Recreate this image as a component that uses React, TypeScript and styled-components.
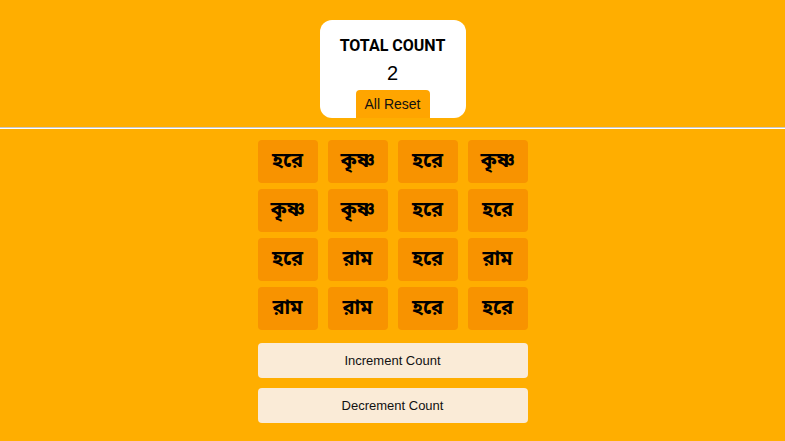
import React, { useState } from "react";
import styled, { createGlobalStyle } from "styled-components";

const Global = createGlobalStyle`
  html, body { margin: 0; padding: 0; background: #ffae00; }
  body { font-family: Roboto, "Liberation Sans", Arial, sans-serif; }
`;

const Page = styled.div`
  min-height: 441px;
  background: #ffae00;
  display: flex;
  flex-direction: column;
  align-items: stretch;
  padding-top: 20px;
  box-sizing: border-box;
`;

const Header = styled.div`
  display: flex;
  justify-content: center;
`;

const Card = styled.div`
  width: 146px;
  height: 98px;
  background: #fff;
  border-radius: 12px;
  box-sizing: border-box;
  padding-top: 16px;
  display: flex;
  flex-direction: column;
  align-items: center;
`;

const Title = styled.div`
  font-family: Roboto, "Liberation Sans", sans-serif;
  font-weight: 700;
  font-size: 16px;
  line-height: 19px;
  color: #000;
`;

const Count = styled.div`
  font-family: "Liberation Sans", Arial, sans-serif;
  font-size: 20px;
  line-height: 24px;
  margin-top: 6px;
  color: #000;
`;

const ResetButton = styled.button`
  margin-top: auto;
  width: 74px;
  height: 28px;
  border: none;
  background: #ffa500;
  border-radius: 4px 4px 0 0;
  font-family: "Liberation Sans", Arial, sans-serif;
  font-size: 14px;
  color: #111;
  padding: 0;
  cursor: pointer;
`;

const Divider = styled.hr`
  margin: 9px 0 0 0;
  border: none;
  border-top: 1px solid #c8c8c8;
  border-bottom: 1px solid #ffffff;
  height: 0;
`;

const Main = styled.div`
  display: flex;
  flex-direction: column;
  align-items: center;
  margin-top: 11px;
`;

const Grid = styled.div`
  display: grid;
  grid-template-columns: repeat(4, 60px);
  grid-auto-rows: 43px;
  column-gap: 10px;
  row-gap: 6px;
`;

const Tile = styled.div`
  background: #f89300;
  border-radius: 4px;
  display: flex;
  align-items: center;
  justify-content: center;
  font-family: "Noto Sans Bengali", "Lohit Bengali", "Noto Sans", sans-serif;
  font-weight: 700;
  font-size: 20px;
  color: #000;
`;

const ActionButton = styled.button<{ $gap: number }>`
  width: 270px;
  height: 35px;
  margin-top: ${(p) => p.$gap}px;
  background: #faebd7;
  border: none;
  border-radius: 4px;
  font-family: "Liberation Sans", Arial, sans-serif;
  font-size: 13px;
  color: #111;
  cursor: pointer;
`;

const words = [
  "হরে", "কৃষ্ণ", "হরে", "কৃষ্ণ",
  "কৃষ্ণ", "কৃষ্ণ", "হরে", "হরে",
  "হরে", "রাম", "হরে", "রাম",
  "রাম", "রাম", "হরে", "হরে",
];

export default function App() {
  const [count, setCount] = useState(2);
  return (
    <Page>
      <Global />
      <Header>
        <Card>
          <Title>TOTAL COUNT</Title>
          <Count>{count}</Count>
          <ResetButton onClick={() => setCount(0)}>All Reset</ResetButton>
        </Card>
      </Header>
      <Divider />
      <Main>
        <Grid>
          {words.map((w, i) => (
            <Tile key={i}>{w}</Tile>
          ))}
        </Grid>
        <ActionButton $gap={13} onClick={() => setCount(count + 1)}>
          Increment Count
        </ActionButton>
        <ActionButton $gap={10} onClick={() => setCount(count - 1)}>
          Decrement Count
        </ActionButton>
      </Main>
    </Page>
  );
}
